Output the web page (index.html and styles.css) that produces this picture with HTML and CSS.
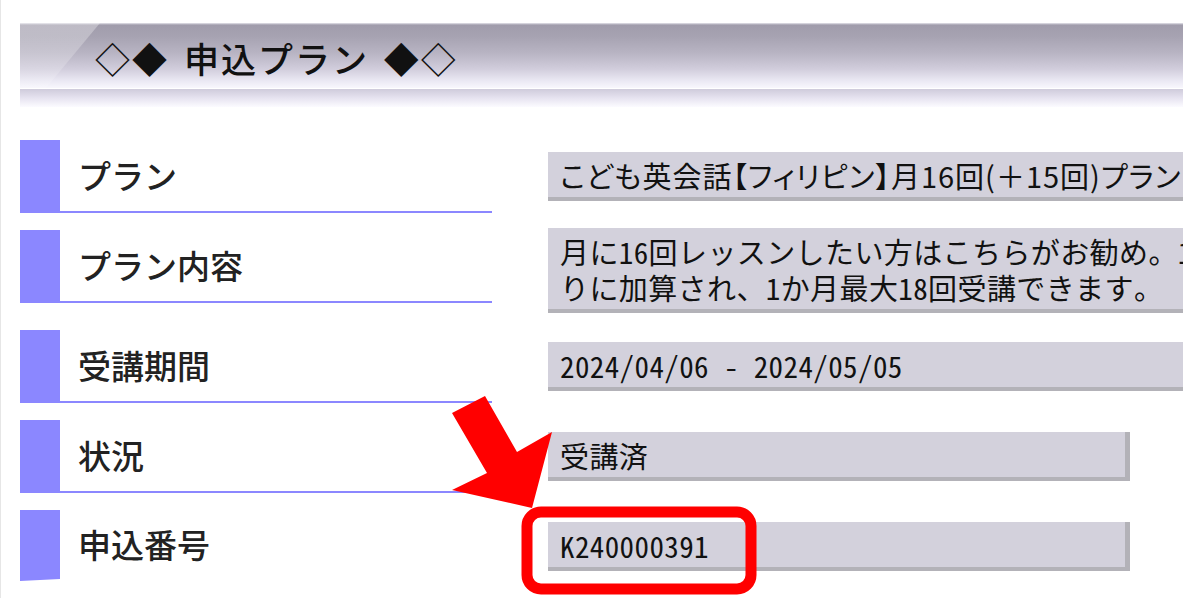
FILE: index.html
```html
<!DOCTYPE html>
<html lang="ja">
<head>
<meta charset="utf-8">
<title>申込プラン</title>
<link rel="stylesheet" href="styles.css">
</head>
<body>
<div class="page">
  <div class="frame">
    <header class="title-bar">
      <h1 class="title">◇◆ 申込プラン ◆◇</h1>
    </header>
    <div class="title-sub"></div>
    <dl class="rows">
      <div class="row">
        <dt class="label">プラン</dt>
        <dd class="value"><div class="box box--wide box--prop">こども英会話【フィリピン】月16回(＋15回)プラン</div></dd>
      </div>
      <div class="row">
        <dt class="label">プラン内容</dt>
        <dd class="value"><div class="box box--wide box--multi">月に16回レッスンしたい方はこちらがお勧め。1<br>りに加算され、1か月最大18回受講できます。</div></dd>
      </div>
      <div class="row">
        <dt class="label">受講期間</dt>
        <dd class="value"><div class="box box--wide">2024/04/06 - 2024/05/05</div></dd>
      </div>
      <div class="row">
        <dt class="label">状況</dt>
        <dd class="value"><div class="box">受講済</div></dd>
      </div>
      <div class="row">
        <dt class="label label--last">申込番号</dt>
        <dd class="value"><div class="box">K240000391</div></dd>
      </div>
    </dl>
  </div>
  <svg class="callout" width="1200" height="613" viewBox="0 0 1200 613" aria-hidden="true">
    <polygon points="452,413 485,396 517,452 552,432 532,508 452,490 487,473" fill="#ff0000"/>
    <rect x="527" y="512" width="224" height="77" rx="14" ry="14" fill="none" stroke="#ff0000" stroke-width="11"/>
  </svg>
</div>
</body>
</html>
```
FILE: styles.css
```css
html, body {
  margin: 0;
  padding: 0;
  background: #ffffff;
}

body {
  font-family: "Noto Sans CJK JP", "Noto Sans", sans-serif;
  color: #111111;
}

.page {
  position: relative;
  width: 1200px;
  height: 613px;
  overflow: hidden;
}

.page::before {
  content: "";
  position: absolute;
  left: 0;
  top: 0;
  width: 1px;
  height: 598px;
  background: #e6e6e6;
}

.frame {
  margin-left: 20px;
  width: 1163px;
  padding-top: 23px;
  overflow: hidden;
}

.title-bar {
  position: relative;
  height: 65px;
  display: flex;
  align-items: center;
  padding-left: 75px;
  overflow: hidden;
  background: linear-gradient(to bottom,
    #e6e5ec 0px,
    #a09cab 2px,
    #a7a3b2 14px,
    #b8b4c3 30px,
    #d1cddc 46px,
    #ebe9f4 58px,
    #f8f7fd 65px);
}

.title-bar::before {
  content: "";
  position: absolute;
  left: -80px;
  top: 0;
  width: 106px;
  height: 100%;
  transform-origin: bottom left;
  transform: skewX(-39.7deg);
  background: linear-gradient(to bottom, rgba(255,255,255,0.32), rgba(255,255,255,0.12));
}

.title {
  position: relative;
  margin: 4px 0 0 0;
  font-size: 35px;
  font-weight: 500;
  letter-spacing: 2px;
  word-spacing: 5px;
  color: #111111;
  line-height: 1;
}

.title-sub {
  margin-top: 1px;
  height: 18px;
  background: linear-gradient(to bottom, #cfcbdb 0%, #e6e3f0 50%, #fcfbff 100%);
}

.rows {
  margin: 33px 0 0 0;
  display: flex;
  flex-direction: column;
  gap: 17px;
}

.row {
  display: grid;
  grid-template-columns: 472px 1fr;
  column-gap: 56px;
  align-items: start;
}

.label {
  box-sizing: border-box;
  height: 73px;
  display: flex;
  align-items: center;
  padding-left: 18px;
  border-left: 40px solid #8b87ff;
  border-bottom: 2px solid #8b87ff;
  font-size: 33px;
  font-weight: 500;
  color: #222222;
  line-height: 1;
}

.label--last {
  border-bottom-color: transparent;
  height: 71px;
}

.value {
  margin: 0;
}

.box {
  box-sizing: border-box;
  width: 582px;
  margin-top: 12px;
  padding: 5px 12px 4px 12px;
  background: #d3d1dc;
  border-right: 5px solid #b3b2b8;
  border-bottom: 4px solid #b3b2b8;
  font-family: "Noto Sans Mono CJK JP", "Noto Sans CJK JP", sans-serif;
  font-size: 29px;
  letter-spacing: 0.4px;
  line-height: 36px;
  color: #111111;
  white-space: nowrap;
  overflow: hidden;
}

.box--wide {
  width: 660px;
}

.box--prop {
  font-family: "Noto Sans CJK JP", sans-serif;
  font-feature-settings: "palt";
  letter-spacing: 1px;
}

.box--multi {
  margin-top: -2px;
}

.callout {
  position: absolute;
  left: 0;
  top: 0;
  pointer-events: none;
}
```
